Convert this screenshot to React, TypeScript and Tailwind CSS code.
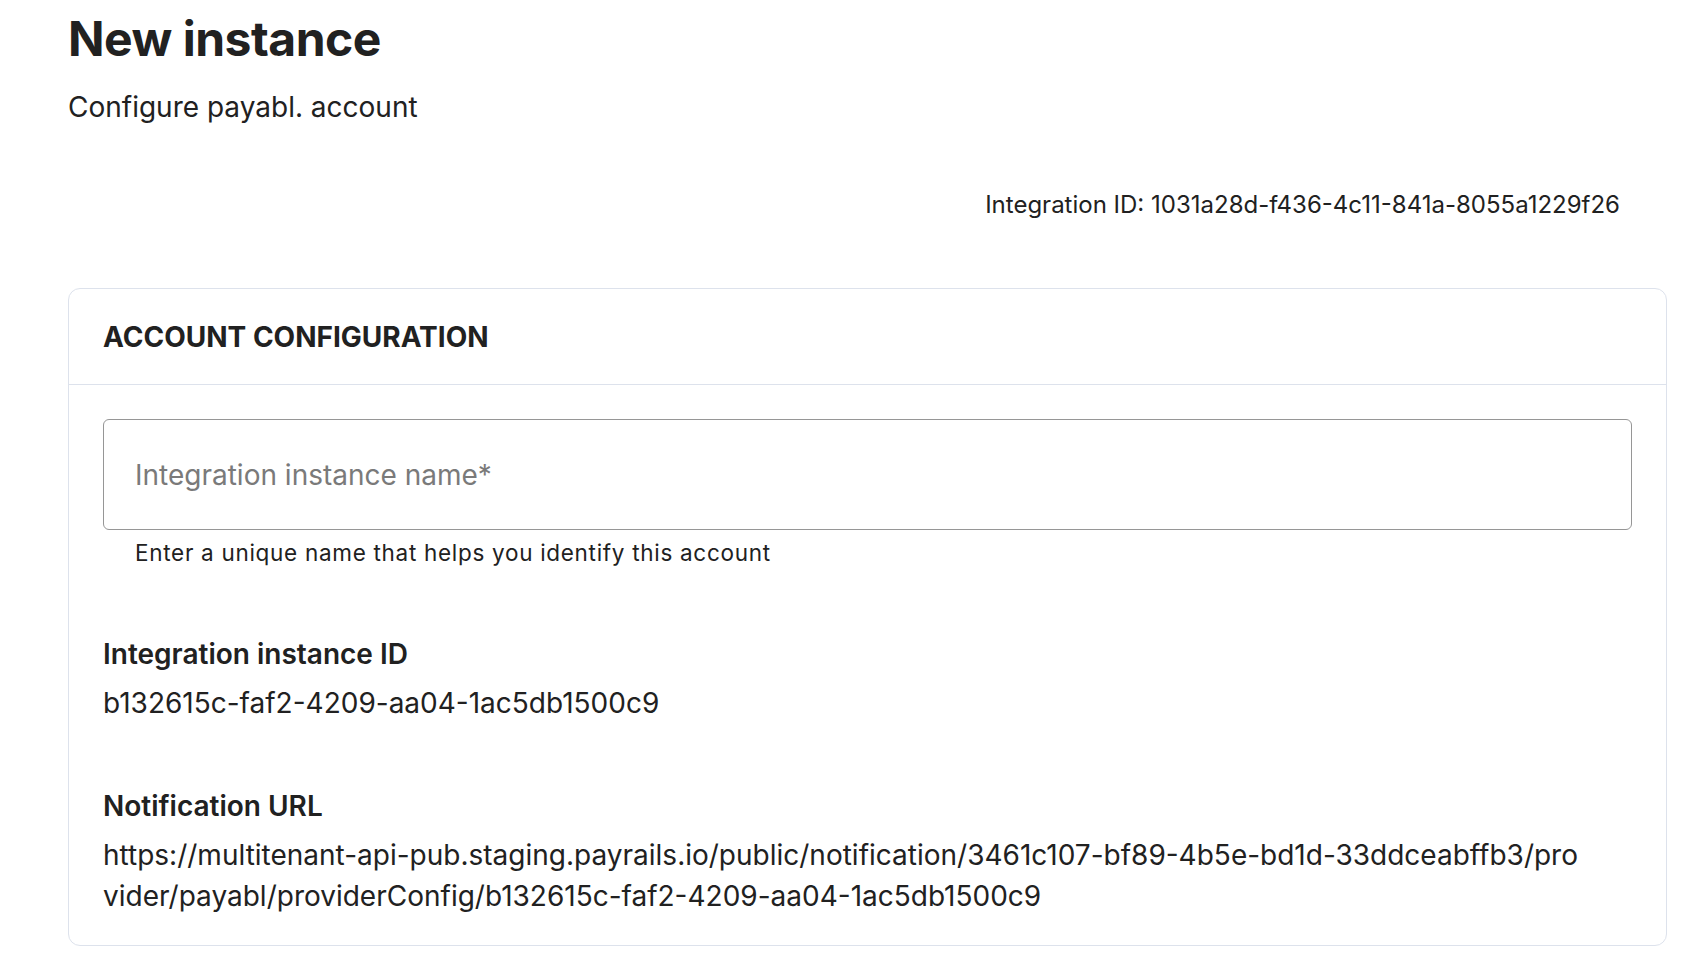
import React from "react";

export default function App() {
  return (
    <div
      className="min-h-screen bg-white text-[#212121]"
      style={{ fontFamily: "Inter, 'Noto Sans', sans-serif" }}
    >
      <div className="pl-[68px] pr-[30px] pt-[10px]">
        <h1 className="text-[48px] font-bold leading-[58px] tracking-[-0.5px]">New instance</h1>
        <p className="mt-[22px] text-[28px] leading-[34px]">Configure payabl. account</p>
        <div className="mt-[66px] flex justify-end pr-[47px]">
          <span className="text-[24px] leading-[30px]">
            Integration ID: 1031a28d-f436-4c11-841a-8055a1229f26
          </span>
        </div>
        <div className="mt-[68px] rounded-[12px] border border-[#dde2ec]">
          <div className="flex h-[96px] items-center border-b border-[#dde2ec] px-[34px]">
            <h2 className="text-[28px] font-bold leading-[34px]">ACCOUNT CONFIGURATION</h2>
          </div>
          <div className="px-[34px] pt-[34px] pb-[28px]">
            <div className="flex h-[111px] items-center rounded-[6px] border-[1.5px] border-[#969696] px-[31px]">
              <span className="text-[28px] text-[#7a7a7a]">Integration instance name*</span>
            </div>
            <p className="mt-[8px] pl-[32px] text-[22.5px] leading-[30px] tracking-[0.7px]">
              Enter a unique name that helps you identify this account
            </p>
            <div className="mt-[69px]">
              <div className="text-[28px] font-semibold leading-[34px]">Integration instance ID</div>
              <div className="mt-[14px] text-[28px] leading-[36px]">b132615c-faf2-4209-aa04-1ac5db1500c9</div>
            </div>
            <div className="mt-[68px]">
              <div className="text-[28px] font-semibold leading-[34px]">Notification URL</div>
              <div className="mt-[12px] text-[28px] leading-[41px] break-all">
                <div>https://multitenant-api-pub.staging.payrails.io/public/notification/3461c107-bf89-4b5e-bd1d-33ddceabffb3/pro</div>
                <div>vider/payabl/providerConfig/b132615c-faf2-4209-aa04-1ac5db1500c9</div>
              </div>
            </div>
          </div>
        </div>
      </div>
    </div>
  );
}
